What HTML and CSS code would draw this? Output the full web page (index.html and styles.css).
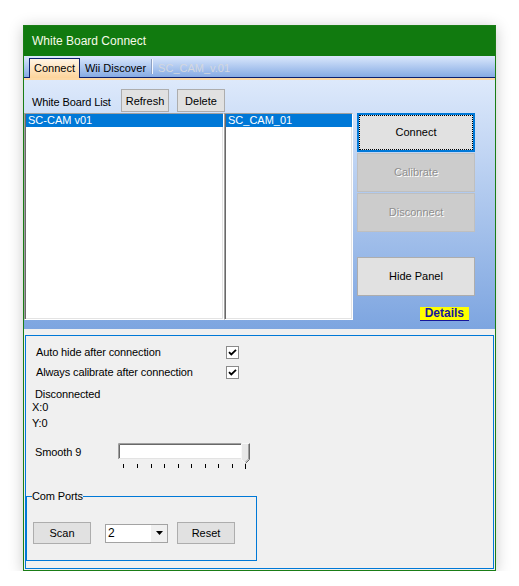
FILE: index.html
```html
<!DOCTYPE html>
<html>
<head>
<meta charset="utf-8">
<title>White Board Connect</title>
<link rel="stylesheet" href="styles.css">
</head>
<body>
<div class="window">
  <div class="titlebar">White Board Connect</div>
  <div class="tabstrip">
    <div class="tab active">Connect</div>
    <div class="tab">Wii Discover</div>
    <div class="tab-sep"></div>
    <div class="tab disabled">SC_CAM_v.01</div>
  </div>
  <div class="tabline"></div>
  <div class="top-panel">
    <div class="list-header">
      <span class="list-label">White Board List</span>
      <button class="btn small">Refresh</button>
      <button class="btn small gap">Delete</button>
    </div>
    <div class="main-row">
      <div class="listbox wide"><div class="item selected">SC-CAM v01</div></div>
      <div class="listbox narrow"><div class="item selected">SC_CAM_01</div></div>
      <div class="actions">
        <button class="btn big focused"><span class="focus-rect">Connect</span></button>
        <button class="btn big disabled">Calibrate</button>
        <button class="btn big disabled">Disconnect</button>
        <button class="btn big hide">Hide Panel</button>
        <span class="details">Details</span>
      </div>
    </div>
  </div>
  <div class="bottom-panel">
    <div class="frame">
      <div class="check-row first">
        <span class="check-label">Auto hide after connection</span>
        <svg class="checkbox" width="13" height="13" viewBox="0 0 13 13"><rect x="0.5" y="0.5" width="12" height="12" fill="#fff" stroke="#8a8a8a"/><path d="M3 6.2 L5.3 8.5 L10 3.8" fill="none" stroke="#000" stroke-width="1.8"/></svg>
      </div>
      <div class="check-row second">
        <span class="check-label">Always calibrate after connection</span>
        <svg class="checkbox" width="13" height="13" viewBox="0 0 13 13"><rect x="0.5" y="0.5" width="12" height="12" fill="#fff" stroke="#8a8a8a"/><path d="M3 6.2 L5.3 8.5 L10 3.8" fill="none" stroke="#000" stroke-width="1.8"/></svg>
      </div>
      <div class="status disc">Disconnected</div>
      <div class="status coord">X:0</div>
      <div class="status coord y">Y:0</div>
      <div class="smooth-row">
        <span class="smooth-label">Smooth 9</span>
        <svg class="slider" width="134" height="28" viewBox="0 0 134 28">
          <rect x="0" y="0" width="126" height="16" fill="#fff"/>
          <path d="M0.5 16 V0.5 H126" stroke="#a0a0a0" fill="none"/>
          <path d="M1.5 15 V1.5 H126" stroke="#696969" fill="none"/>
          <path d="M1 15.5 H126" stroke="#e3e3e3" fill="none"/>
          <path d="M123.5 0.5 H131.5 V16.5 L127.5 20.5 L123.5 16.5 Z" fill="#e8e8e8" stroke="#f8f8f8"/>
          <path d="M131.5 0.5 V16.5 L127.5 20.5" stroke="#696969" fill="none"/>
          <path d="M130.5 1 V16 L127.5 19" stroke="#a0a0a0" fill="none"/>
          <g stroke="#000">
            <path d="M5.5 21 V25"/><path d="M19.5 21 V25"/><path d="M33.5 21 V25"/>
            <path d="M46.5 21 V25"/><path d="M60.5 21 V25"/><path d="M73.5 21 V25"/>
            <path d="M87.5 21 V25"/><path d="M100.5 21 V25"/><path d="M114.5 21 V25"/>
            <path d="M127.5 21 V26"/>
          </g>
        </svg>
      </div>
      <fieldset class="group">
        <legend>Com Ports</legend>
        <div class="group-row">
          <button class="btn port">Scan</button>
          <div class="combo"><span class="combo-value">2</span><span class="combo-arrow"><svg width="7" height="4" viewBox="0 0 7 4"><path d="M0 0 H7 L3.5 4 Z" fill="#000"/></svg></span></div>
          <button class="btn port reset">Reset</button>
        </div>
      </fieldset>
    </div>
  </div>
</div>
</body>
</html>
```
FILE: styles.css
```css
* { box-sizing: border-box; }

body {
  margin: 0;
  background: #fff;
  font-family: "Liberation Sans", Arial, sans-serif;
  font-size: 11px;
  letter-spacing: -0.12px;
  color: #000;
}

.window {
  margin: 25px 0 0 23px;
  width: 473px;
  height: 546px;
  border: 1px solid #1a7d16;
  box-shadow: 0 2px 14px rgba(0, 0, 0, 0.22);
  display: flex;
  flex-direction: column;
  background: #f0f0f0;
}

.titlebar {
  flex: none;
  height: 30px;
  background: #117a0f;
  color: #f6fbe9;
  font-size: 12px;
  letter-spacing: 0;
  line-height: 30px;
  padding-left: 8px;
}

.tabstrip {
  flex: none;
  height: 22px;
  display: flex;
  align-items: flex-end;
  padding-left: 5px;
  background: linear-gradient(#dbe8fc, #86abe4);
  border-bottom: 1px solid #0b1f6e;
}

.tab {
  height: 20px;
  margin-bottom: -1px;
  line-height: 19px;
  padding: 0 4px;
  border: 1px solid transparent;
  border-bottom: 0;
  white-space: nowrap;
  letter-spacing: 0;
}

.tab.active {
  background: linear-gradient(#fff4e4, #fdd49b);
  border-color: #0b1f6e;
}

.tab.disabled {
  color: #d3d7df;
}

.tab-sep {
  width: 2px;
  height: 15px;
  margin: 0 0 3px 0;
  border-left: 1px solid #8ea1c2;
  border-right: 1px solid #f4f8ff;
}

.tabline {
  flex: none;
  height: 2px;
  background: #fdd8a4;
}

.top-panel {
  flex: none;
  height: 249px;
  background: linear-gradient(#dde9fb, #7da5e0);
}

.list-header {
  height: 33px;
  padding-top: 9px;
  display: flex;
  align-items: flex-start;
}

.list-label {
  width: 89px;
  margin-left: 8px;
  margin-top: 7px;
  line-height: 13px;
}

.btn {
  font-family: "Liberation Sans", Arial, sans-serif;
  font-size: 11px;
  letter-spacing: 0;
  color: #000;
  background: #e1e1e1;
  border: 1px solid #adadad;
  padding: 0;
  margin: 0;
  display: flex;
  align-items: center;
  justify-content: center;
}

.btn.small {
  width: 48px;
  height: 23px;
}

.btn.small.gap {
  margin-left: 8px;
}

.main-row {
  height: 207px;
  display: flex;
}

.listbox {
  height: 207px;
  background: #fff;
  border: 1px solid;
  border-color: #a0a0a0 #fff #fff #a0a0a0;
  padding-left: 1px;
  box-shadow: inset 1px 0 #696969, inset 0 -1px #e3e3e3, inset -1px 0 #e3e3e3;
}

.listbox.wide { width: 200px; }
.listbox.narrow { width: 129px; }

.item {
  height: 13px;
  line-height: 13px;
  padding-left: 2px;
  white-space: nowrap;
  letter-spacing: 0;
}

.item.selected {
  background: #0078d7;
  color: #fff;
}

.actions {
  width: 118px;
  margin-left: 4px;
  display: flex;
  flex-direction: column;
}

.btn.big {
  width: 118px;
  height: 39px;
  flex: none;
  margin-bottom: 1px;
  padding-bottom: 2px;
}

.btn.focused {
  border: 2px solid #0078d7;
  align-items: stretch;
  justify-content: stretch;
  padding-bottom: 0;
}

.focus-rect {
  flex: 1;
  border: 1px dotted #000;
  display: flex;
  align-items: center;
  justify-content: center;
  padding-bottom: 2px;
}

.btn.disabled {
  background: #cccccc;
  border-color: #bfbfbf;
  color: #8f8f8f;
  text-shadow: 1px 1px 0 #fff;
}

.btn.hide {
  margin-top: 24px;
}

.details {
  align-self: flex-end;
  margin: 10px 6px 0 0;
  height: 14px;
  line-height: 13px;
  padding: 0 5px;
  background: #ffff00;
  color: #16169b;
  font-size: 12px;
  font-weight: bold;
  letter-spacing: 0;
  border-bottom: 1px solid #16169b;
}

.bottom-panel {
  flex: 1;
  padding: 6px 1px 1px 1px;
  display: flex;
  flex-direction: column;
}

.frame {
  flex: 1;
  border: 1px solid #0078d7;
  padding-top: 10px;
}

.check-row {
  height: 13px;
  display: flex;
  align-items: center;
  padding-left: 10px;
}

.check-row.second { margin-top: 7px; }

.check-label {
  width: 190px;
  line-height: 13px;
}

.checkbox { display: block; }

.status {
  line-height: 13px;
  height: 13px;
}

.status.disc {
  margin-top: 9px;
  padding-left: 9px;
}

.status.coord { padding-left: 6px; }
.status.coord.y { margin-top: 3px; }

.smooth-row {
  margin-top: 13px;
  height: 28px;
  display: flex;
  align-items: flex-start;
}

.smooth-label {
  width: 92px;
  padding-left: 9px;
  margin-top: 3px;
  line-height: 13px;
}

.slider { display: block; }

.group {
  margin: 19px 0 0 0;
  padding: 0;
  width: 231px;
  border: 1px solid #0078d7;
  min-width: 0;
}

.group legend {
  margin-left: 5px;
  padding: 0;
  line-height: 13px;
  font-size: 11px;
}

.group-row {
  display: flex;
  align-items: center;
  padding: 19px 0 16px 6px;
}

.btn.port {
  width: 58px;
  height: 22px;
}

.combo {
  margin-left: 14px;
  width: 63px;
  height: 19px;
  border: 1px solid #a3a3a3;
  background: #fff;
  display: flex;
  align-items: stretch;
}

.combo-value {
  flex: 1;
  line-height: 17px;
  padding-left: 2px;
  font-size: 12px;
}

.combo-arrow {
  width: 16px;
  background: #f0f0f0;
  display: flex;
  align-items: center;
  justify-content: center;
}

.combo-arrow svg { display: block; }

.btn.reset { margin-left: 9px; }
```
